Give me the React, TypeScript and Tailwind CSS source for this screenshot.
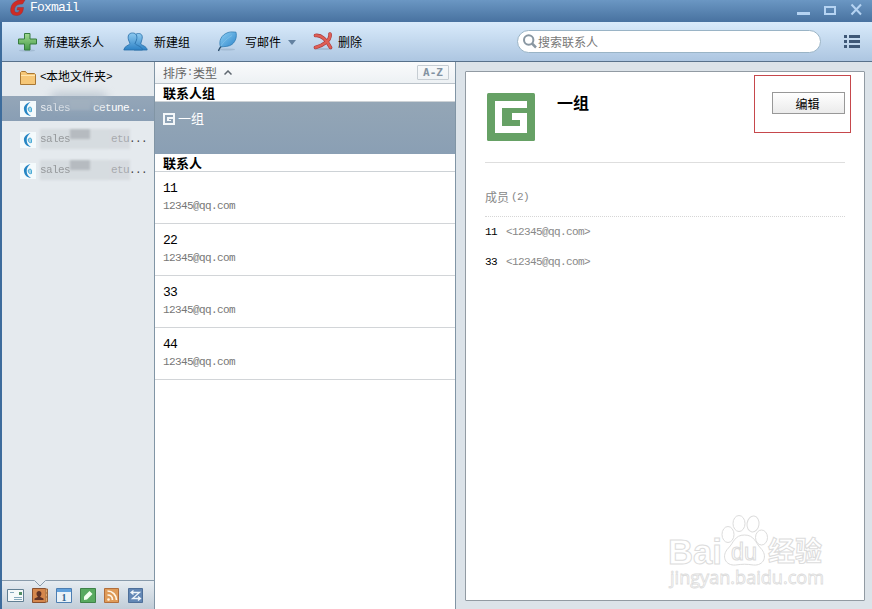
import type { ReactNode } from 'react';

interface Account {
  id: number;
  head: string;
  tail: string;
  selected?: boolean;
}

interface Contact {
  name: string;
  email: string;
}

const ACCOUNTS: Account[] = [
  { id: 1, head: 'sales', tail: 'cetune...', selected: true },
  { id: 2, head: 'sales', tail: 'etu...' },
  { id: 3, head: 'sales', tail: 'etu...' },
];

const CONTACTS: Contact[] = [
  { name: '11', email: '12345@qq.com' },
  { name: '22', email: '12345@qq.com' },
  { name: '33', email: '12345@qq.com' },
  { name: '44', email: '12345@qq.com' },
];

const MEMBERS = CONTACTS.filter((c) => c.name === '11' || c.name === '33');

const MONO = "font-['Liberation_Mono','Noto_Sans_CJK_SC',monospace]";
// 11px glyphs on a 6px advance
const MONO_SMALL = `text-[11px] tracking-[-0.6px] ${MONO}`;

function GroupIcon({ size, color, bg }: { size: number; color: string; bg: string }) {
  return (
    <svg width={size} height={size} viewBox="0 0 48 48" className="shrink-0">
      <rect width="48" height="48" rx="1.5" fill={bg} />
      <path d="M8 8h32v7H15v18h18v-6H25v-7h15v20H8z" fill={color} />
    </svg>
  );
}

// same mark as GroupIcon, redrawn on a 12px grid so that it stays crisp in the list
function GroupIconSmall() {
  return (
    <svg width="12" height="12" viewBox="0 0 12 12" className="shrink-0" shapeRendering="crispEdges">
      <path d="M0 0h12v12H0z" fill="#f4f7f9" />
      <path d="M2 2h8v2H4v4h4V7H6V6h4v4H2z" fill="#8fa3b6" />
    </svg>
  );
}

function FoxmailLogo() {
  return (
    <svg width="16" height="17" viewBox="0 0 16 17" className="shrink-0">
      <path
        d="M15 0C9-1 2 1 .8 8.500c-.8 5 2 7.200 6 7 4-.2 6.200-2.500 6.700-8H7.600l-.6 2.400h2.700c-.5 2-1.500 2.700-2.900 2.700-2 0-2.700-1.400-2.200-3.900C5.300 5.400 8 4 12.500 4z"
        fill="#cf2b24"
        stroke="#9d2b33"
        strokeWidth=".5"
      />
    </svg>
  );
}

function PlusIcon() {
  return (
    <svg width="20" height="20" viewBox="0 0 20 20">
      <defs>
        <linearGradient id="plus" x1="0" y1="0" x2="0" y2="1">
          <stop offset="0" stopColor="#a3da92" />
          <stop offset="1" stopColor="#429a46" />
        </linearGradient>
      </defs>
      <ellipse cx="10" cy="18.500" rx="8" ry="1" fill="#8ba5bd" opacity=".5" />
      <path d="M7.500 1.500h5.500V7H19.500v5H13v6H7.500v-6H1.500V7h6z" fill="url(#plus)" stroke="#367d3e" />
    </svg>
  );
}

function GroupPeopleIcon() {
  return (
    <svg width="25" height="20" viewBox="0 0 25 20">
      <defs>
        <linearGradient id="people" x1="0" y1="0" x2="0" y2="1">
          <stop offset="0" stopColor="#8ecaf0" />
          <stop offset="1" stopColor="#2d82c6" />
        </linearGradient>
      </defs>
      <g fill="url(#people)" stroke="#286ea8" strokeWidth=".8">
        <path d="M12 9c-1-4-.5-7.500 3.500-7.500S20 5 18.500 9l-.8 3c1 1.500 6 2 6.500 6H11z" />
        <path d="M5.500 8C4.500 4 5.500 1 9.500 1s5 3 4 7L12 11.500c1 2 7 2.500 7.500 6.500H.8c.4-4 5.200-4.500 6.200-6.500z" />
      </g>
    </svg>
  );
}

function FeatherIcon() {
  return (
    <svg width="21" height="21" viewBox="0 0 21 21">
      <defs>
        <linearGradient id="feather" x1="0" y1="0" x2="1" y2="1">
          <stop offset="0" stopColor="#8fd0f4" />
          <stop offset="1" stopColor="#2d86cb" />
        </linearGradient>
      </defs>
      <ellipse cx="10" cy="18.500" rx="8" ry="1" fill="#8ba5bd" opacity=".5" />
      <path d="M3.500 16C1.500 10 4 4 11 1.500c3-1 5.500-.5 8-.3 1 4 0 9-4 12.200-3 2.300-7 2-11.500 2.600z" fill="url(#feather)" stroke="#2a75ad" strokeWidth=".7" />
      <path d="M15 4.500C9 8 4 13 1.500 20" fill="none" stroke="#7cbde6" strokeWidth=".9" />
      <path d="M4 15.500C3 17 2 18 1.500 20" fill="none" stroke="#2c4a66" strokeWidth="1.300" />
    </svg>
  );
}

function DeleteIcon() {
  return (
    <svg width="20" height="19" viewBox="0 0 20 19">
      <ellipse cx="10" cy="17" rx="9" ry="1" fill="#8ba5bd" opacity=".5" />
      <g fill="none" strokeLinecap="round" strokeLinejoin="round">
        <path d="M2.500 3.500C8 2.500 14 8 17.500 15.500M17 2C18 8 11 13 2.500 15.500" stroke="#a8393e" strokeWidth="3.600" />
        <path d="M2.500 3.500C8 2.500 14 8 17.500 15.500M17 2C18 8 11 13 2.500 15.500" stroke="#df5f55" strokeWidth="2.400" />
      </g>
    </svg>
  );
}

function FolderIcon() {
  return (
    <svg width="16" height="14" viewBox="0 0 16 14" className="shrink-0">
      <path d="M.5 13.500v-12l1-1h4l1.500 2h7.500l1 1v10z" fill="#f6c777" stroke="#a97835" />
      <path d="M1 4.500h14" stroke="#ffe6b0" />
    </svg>
  );
}

function AccountIcon() {
  return (
    <svg width="16" height="16" viewBox="0 0 16 16" className="shrink-0">
      <rect width="16" height="16" fill="#f4fafc" />
      <path d="M10.500 1C6 2.500 3.500 5 4 8.500c.4 3.500 3 6 7 6.500-3-2-4.300-4-4.300-7S8 3 10.500 1z" fill="#2686c4" />
      <path d="M8.300 7c.8-1.200 3-1.200 3.200.3v3.200c-1.800.6-3.500-.3-3.200-3.500z" fill="#9ed5ea" stroke="#3aa0d0" strokeWidth=".9" />
    </svg>
  );
}

function TitleBar() {
  return (
    <header className="flex h-[22px] shrink-0 items-start justify-between bg-gradient-to-b from-[#6b97c3] to-[#4872a0] pl-[10px] pr-[10px]">
      <div className="flex">
        <FoxmailLogo />
        <span className={`ml-1 text-[13px] leading-[16px] tracking-[-0.8px] text-white ${MONO}`}>Foxmail</span>
      </div>
      <svg width="66" height="20" viewBox="0 0 66 20" fill="none" stroke="#b5d3f2">
        <path d="M1 13.500h13" strokeWidth="3" />
        <path d="M29 7h10v7H29z" strokeWidth="2" />
        <path d="M55.500 4.500l9.500 10m0-10l-9.500 10" strokeWidth="2" />
      </svg>
    </header>
  );
}

function ToolButton({ icon, label, className }: { icon: ReactNode; label: string; className: string }) {
  return (
    <button className={`flex items-center text-xs text-black ${className}`}>
      {icon}
      <span>{label}</span>
    </button>
  );
}

function Toolbar() {
  return (
    <div className="flex h-10 shrink-0 items-center border-b border-[#58718b] bg-gradient-to-b from-[#d9ebfb] to-[#adc6e1] pl-[15px] pr-3">
      <ToolButton icon={<PlusIcon />} label="新建联系人" className="w-[106px] gap-[7px]" />
      <ToolButton icon={<GroupPeopleIcon />} label="新建组" className="w-[94px] gap-[6px]" />
      <ToolButton icon={<FeatherIcon />} label="写邮件" className="w-[71px] gap-[7px]" />
      <svg width="8" height="5" viewBox="0 0 8 5" className="mt-0.5">
        <path d="M0 0h8L4 5z" fill="#6381a0" />
      </svg>
      <ToolButton icon={<DeleteIcon />} label="删除" className="ml-[17px] gap-[5px]" />
      <div className="ml-auto flex h-[23px] w-[304px] items-center rounded-full border border-[#9ab4c6] bg-white pl-[5px] text-[#777]">
        <svg width="14" height="15" viewBox="0 0 14 15" fill="none" stroke="#8997a2">
          <circle cx="5.700" cy="6" r="4.700" strokeWidth="2" />
          <path d="M9 9.500l4 4" strokeWidth="2.500" />
        </svg>
        <span className="ml-px text-xs">搜索联系人</span>
      </div>
      <svg width="16" height="13" viewBox="0 0 16 13" fill="#3f5877" className="ml-[23px]" shapeRendering="crispEdges">
        <path d="M0 0h3v3H0zM5 0h11v3H5zM0 5h3v3H0zM5 5h11v3H5zM0 10h3v3H0zM5 10h11v3H5z" />
      </svg>
    </div>
  );
}

function AccountRow({ account }: { account: Account }) {
  return (
    <div
      className={`relative flex items-center pl-[18px] ${MONO_SMALL} ${
        account.selected
          ? 'h-[25px] bg-gradient-to-b from-[#94a6b8] to-[#899eb4] text-white'
          : 'h-[31px] text-[#444]'
      }`}
    >
      <AccountIcon />
      <div className="ml-1 flex w-[107px] justify-between">
        <span className="opacity-80">{account.head}</span>
        <span>{account.tail}</span>
      </div>
      {account.selected ? (
        <>
          <div className="absolute -top-1 left-[48px] h-4 w-[58px] rounded-full bg-[#a8b6c3]/60 blur-[4px]" />
          <div className="absolute left-[68px] top-1 h-[10px] w-5 bg-[#a2b1bf]/70 blur-[1px]" />
        </>
      ) : (
        <div className="absolute left-[38px] top-[5px] flex h-5 w-[90px] bg-[#c8cdd2]/50 blur-[1px]">
          <div className="ml-[30px] h-[10px] w-5 bg-[#b6bbc0]" />
          <div className="ml-5 h-5 w-5 bg-[#d9dde1]/40" />
        </div>
      )}
    </div>
  );
}

function ModuleTabs() {
  return (
    <footer className="relative flex h-[29px] shrink-0 items-center border-t border-[#899bab] bg-gradient-to-b from-[#e6ecf1] to-[#c1cdd8] pl-[5px]">
      <svg width="12" height="7" viewBox="0 0 12 7" className="absolute -top-px left-[32px]">
        <path d="M0 0h12L6 6z" fill="#e5eaee" />
        <path d="M.5.5L6 6 11.500.5" fill="none" stroke="#899bab" />
      </svg>
      <svg width="137" height="16" viewBox="0 0 137 16" className="mt-[2px]">
        <path d="M.5 1.500h16v12H.5z" fill="#f5f9fa" stroke="#617f93" />
        <path d="M12 4h3v3h-3z" fill="#528d65" />
        <path d="M3 4.500h4M7 9.500h8M7 11.500h8" stroke="#83a8bd" />
        <path d="M25.500.5h13v14h-13z" fill="#d5874c" stroke="#88502f" />
        <path d="M38.500 1h2v13h-2M39 5h2M39 9h2" fill="#e2a667" stroke="#98623b" />
        <path d="M32 3c3 0 3 4 1.300 5.200v.8l3.200 1.500V12h-9v-1.500L30.700 9v-.8C29 7 29 3 32 3z" fill="#603326" />
        <path d="M49.500.5h15v14h-15z" fill="#eaf2f7" stroke="#4c7eb2" />
        <path d="M50 1h14v3H50z" fill="#61a1dc" />
        <text x="57" y="12.500" textAnchor="middle" fontSize="10" fontWeight="700" fontFamily="Liberation Serif, serif" fill="#31648f">1</text>
        <path d="M73.500.5h15v14h-15z" fill="#58aa60" stroke="#3f8248" />
        <path d="M77 12v-3.500l5.500-5.500 3 3L80 11.500z" fill="#f2fff0" />
        <path d="M97.500.5h14v14h-14z" fill="#df9b58" stroke="#b26e3b" />
        <path d="M100.500 7c3 0 5 2 5 5m-5-9c5 0 9 4 9 9" fill="none" stroke="#fff6e5" strokeWidth="1.700" />
        <circle cx="101.500" cy="11.500" r="1.300" fill="#fff6e5" />
        <path d="M121.500.5h14v14h-14z" fill="#6287b5" stroke="#4e6f99" />
        <path d="M124 4.500h8.500l-7 6h8M126.500 2.500l-2.500 2 2.500 2m4.500 2l2.500 2-2.500 2" fill="none" stroke="#eff6fa" strokeWidth="1.300" />
      </svg>
    </footer>
  );
}

function Sidebar() {
  return (
    <aside className="flex w-[153px] shrink-0 flex-col border-r border-[#8195a5] bg-[#e5eaee]">
      <div className="flex h-[34px] items-center pb-[3px] pl-[18px] text-xs text-black">
        <FolderIcon />
        <span className={`ml-1 flex items-center ${MONO}`}>
          <span className="text-[11px] tracking-[-0.6px]">&lt;</span>
          本地文件夹
          <span className="text-[11px] tracking-[-0.6px]">&gt;</span>
        </span>
      </div>
      <div className="flex-1">
        <AccountRow account={ACCOUNTS[0]} />
        <div className="pt-[3px]">
          {ACCOUNTS.slice(1).map((a) => (
            <AccountRow key={a.id} account={a} />
          ))}
        </div>
      </div>
      <ModuleTabs />
    </aside>
  );
}

function SectionTitle({ children }: { children: ReactNode }) {
  return (
    <h2 className="h-[18px] border-b border-[#cdd2d6] pl-2 text-[13px] font-bold leading-[17px] text-black">
      {children}
    </h2>
  );
}

function ContactList() {
  return (
    <section className="w-[301px] shrink-0 border-r border-[#8195a5] bg-white">
      <div className="flex h-[22px] items-center border-b border-[#bbc3ca] bg-gradient-to-b from-[#fafbfc] to-[#edf1f4] pl-2 pr-[6px] text-xs text-[#666]">
        <span>排序</span>
        <span className={`text-[10px] ${MONO}`}>:</span>
        <span>类型</span>
        <svg width="8" height="5" viewBox="0 0 8 5" className="ml-[7px]" fill="none" stroke="#5f6870" strokeWidth="1.500">
          <path d="M.5 4.500L4 1l3.500 3.500" />
        </svg>
        <span className="ml-auto flex h-[15px] w-8 items-center justify-center rounded-[1px] border border-[#c6cdd3] font-['DejaVu_Sans_Mono',monospace] text-[11px] font-bold leading-none text-[#8393a2]">
          A-Z
        </span>
      </div>
      <SectionTitle>联系人组</SectionTitle>
      <div className="flex h-[52px] items-start bg-gradient-to-b from-[#94a6b6] to-[#8a9fb4] pl-2 pt-[7px] text-[13px] text-white">
        <div className="pt-1">
          <GroupIconSmall />
        </div>
        <span className="ml-[3px] leading-[18px]">一组</span>
      </div>
      <SectionTitle>联系人</SectionTitle>
      {CONTACTS.map((c) => (
        <div key={c.name} className={`h-[52px] border-b border-[#d2d5d8] pl-2 pt-2 ${MONO}`}>
          <div className="text-[13px] leading-[18px] tracking-[-0.8px] text-black">{c.name}</div>
          <div className="text-[11px] leading-[17px] tracking-[-0.6px] text-[#777]">{c.email}</div>
        </div>
      ))}
    </section>
  );
}

function Watermark() {
  return (
    <svg width="164" height="80" viewBox="0 0 164 80" className="absolute bottom-[8px] right-[36px]" fill="#fff" stroke="#dcdcdc">
      <text x="4" y="52" fontSize="35" fontWeight="700" textLength="54" lengthAdjust="spacingAndGlyphs" fontFamily="Liberation Sans, sans-serif">Bai</text>
      <ellipse cx="64" cy="22.500" rx="6" ry="8" />
      <ellipse cx="75" cy="11.500" rx="6" ry="8" />
      <ellipse cx="89" cy="12" rx="6" ry="8" transform="rotate(8 89 12)" />
      <ellipse cx="97.500" cy="25.500" rx="6" ry="7.500" />
      <path d="M80.500 23c-10 0-11 8-16 13-8 8-3 18 7 17 7-1 11-1 18 0 10 1 15-9 7-17-5-5-6-13-16-13z" />
      <text x="67" y="48" fontSize="23" textLength="26" lengthAdjust="spacingAndGlyphs" fontFamily="Liberation Sans, sans-serif">du</text>
      <text x="104" y="49" fontSize="27" fontWeight="700" textLength="54" lengthAdjust="spacingAndGlyphs" fontFamily="Noto Sans CJK SC, sans-serif">经验</text>
      <text x="6" y="72" fontSize="18" strokeWidth=".8" textLength="154" lengthAdjust="spacingAndGlyphs" fontFamily="Open Sans, sans-serif">jingyan.baidu.com</text>
    </svg>
  );
}

function GroupDetail() {
  return (
    <main className="flex flex-1 bg-[#dce3e9] pb-2 pl-[9px] pr-[7px] pt-[9px]">
      <article className="relative flex-1 rounded-[1px] border border-[#929ba3] bg-white px-[19px] pt-[20px]">
        <div className="flex h-[71px] items-start border-b border-[#dedede] pl-[2px]">
          <div className="pt-px">
            <GroupIcon size={48} color="#ffffff" bg="#66a165" />
          </div>
          <h1 className="ml-[22px] text-base font-bold leading-5 text-black">一组</h1>
          <button className="ml-auto h-[22px] w-[73px] border border-[#989898] bg-gradient-to-b from-white to-[#ebebeb] text-xs leading-[18px] text-black">
            <span className="block pr-[2px] leading-[17px]">编辑</span>
          </button>
        </div>
        <div className="flex h-[54px] items-end border-b border-dotted border-[#d6d6d6] pb-[10px] text-xs leading-[18px] text-[#888]">
          <span>成员</span>
          <span className={`ml-[2px] leading-[18px] ${MONO_SMALL}`}>(2)</span>
        </div>
        {MEMBERS.map((m) => (
          <div key={m.name} className={`flex h-[30px] items-center gap-[9px] ${MONO_SMALL}`}>
            <span className="text-black">{m.name}</span>
            <span className="text-[#888]">&lt;{m.email}&gt;</span>
          </div>
        ))}
        <div className="absolute right-[13px] top-[3px] h-[58px] w-[97px] border border-[#c6484c]" />
        <Watermark />
      </article>
    </main>
  );
}

export default function App() {
  return (
    <div className="flex h-[609px] w-[872px] flex-col overflow-hidden font-['Noto_Sans_CJK_SC',sans-serif]">
      <TitleBar />
      <div className="flex flex-1 flex-col border-l-2 border-[#3d6c9c]">
        <Toolbar />
        <div className="flex flex-1">
          <Sidebar />
          <ContactList />
          <GroupDetail />
        </div>
      </div>
    </div>
  );
}
